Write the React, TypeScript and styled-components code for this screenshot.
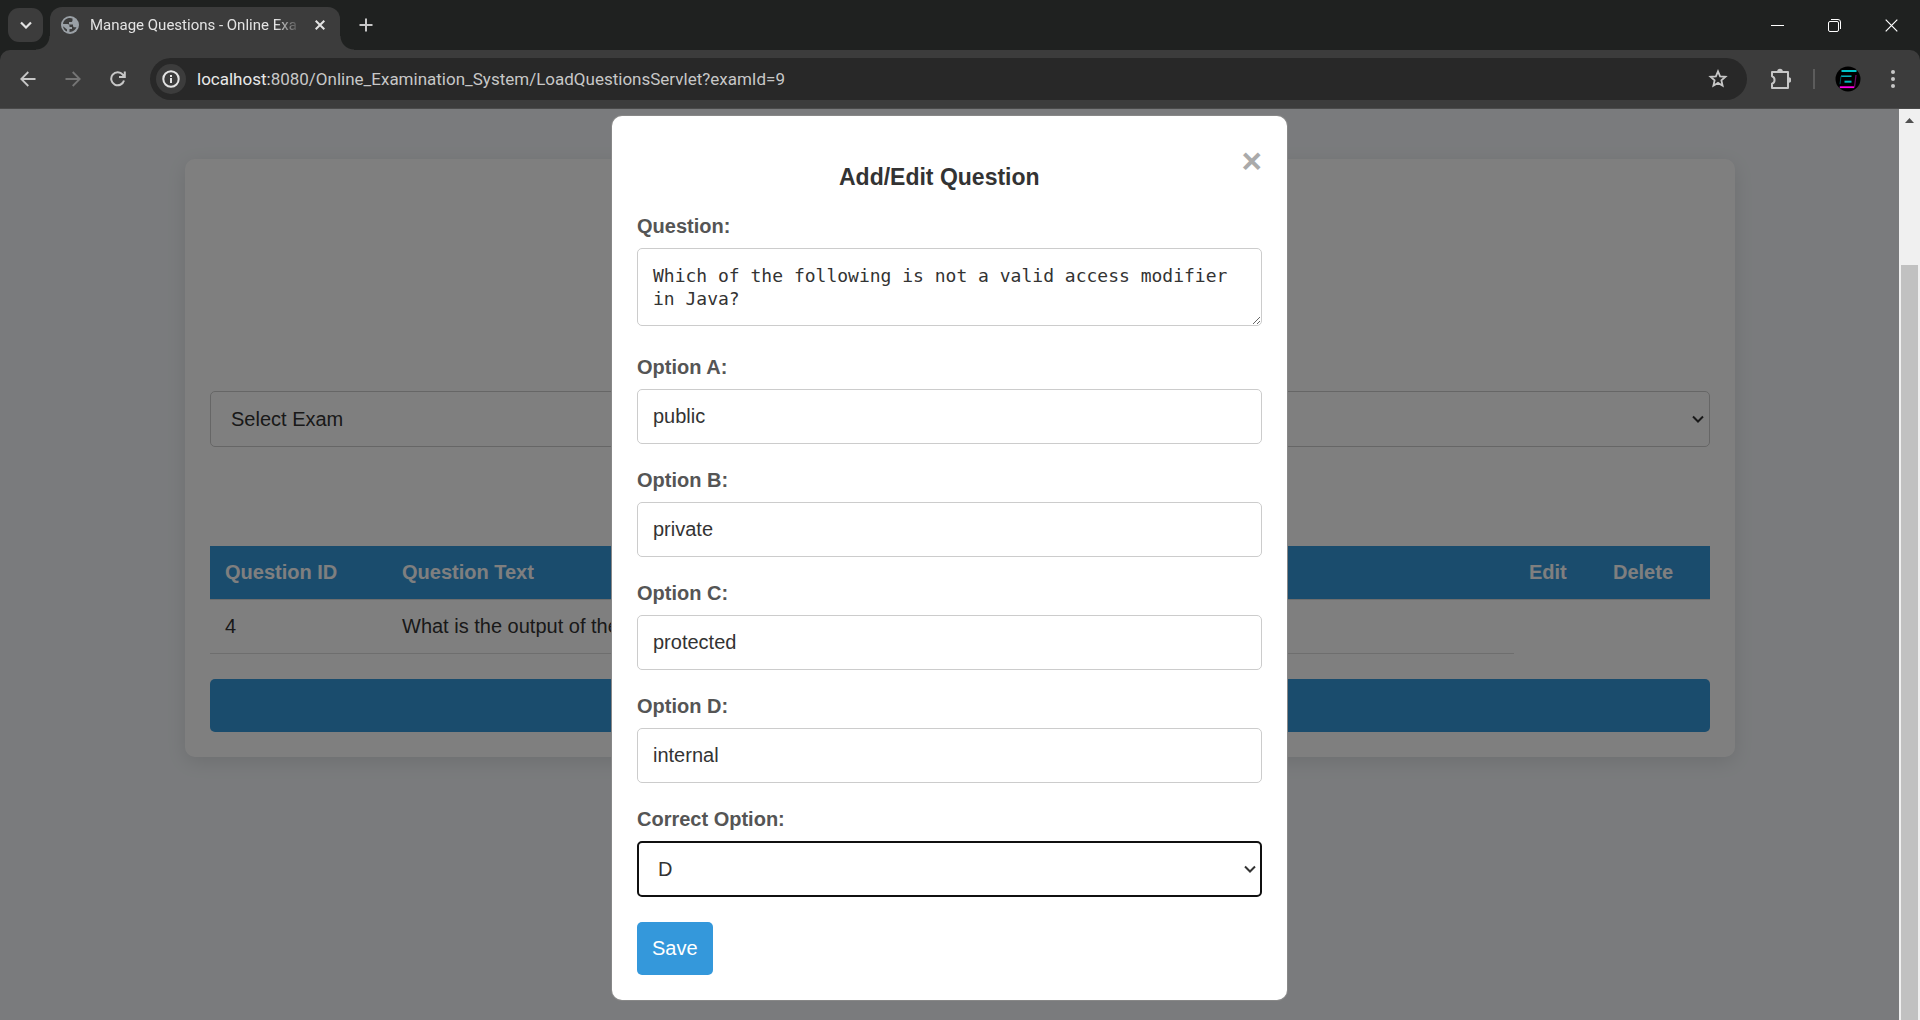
import React, { useState } from "react";
import styled, { createGlobalStyle } from "styled-components";

const UI_FONT = 'Roboto, "Open Sans", "Noto Sans", sans-serif';
const PAGE_FONT = '"Liberation Sans", Arial, sans-serif';
const MONO_FONT = '"DejaVu Sans Mono", monospace';

const GlobalStyle = createGlobalStyle`
  *, *::before, *::after { box-sizing: border-box; }
  body { margin: 0; background: #f4f7fa; font-family: ${PAGE_FONT}; }
  button, input, select, textarea { font: inherit; margin: 0; }
`;

/* ---------- Browser chrome ---------- */

const Browser = styled.div`
  display: flex;
  flex-direction: column;
  height: 100vh;
  overflow: hidden;
`;

const TabStrip = styled.header`
  display: flex;
  align-items: center;
  flex: none;
  height: 50px;
  padding-left: 8px;
  background: #1f2120;
  color: #e3e3e3;
`;

const ChromeButton = styled.button<{ $w?: number; $h?: number; $color?: string }>`
  display: flex;
  align-items: center;
  justify-content: center;
  flex: none;
  width: ${(p) => p.$w ?? 45}px;
  height: ${(p) => p.$h ?? 42}px;
  padding: 0;
  border: 0;
  background: transparent;
  color: ${(p) => p.$color ?? "#c7c7c7"};
`;

const TabSearch = styled(ChromeButton)`
  border-radius: 11px;
  background: #3c3c3c;
`;

const Tab = styled.div`
  position: relative;
  display: flex;
  align-items: center;
  align-self: flex-end;
  width: 290px;
  height: 43px;
  margin-left: 7px;
  padding: 0 9px 7px 11px;
  border-radius: 12px 12px 0 0;
  background: #3c3c3c;

  &::before,
  &::after {
    content: "";
    position: absolute;
    bottom: 0;
    width: 14px;
    height: 14px;
  }
  &::before {
    right: 100%;
    background: radial-gradient(circle at 0 0, transparent 13px, #3c3c3c 14px);
  }
  &::after {
    left: 100%;
    background: radial-gradient(circle at 100% 0, transparent 13px, #3c3c3c 14px);
  }
`;

const TabTitle = styled.span`
  flex: 1;
  margin: 0 8px 0 11px;
  overflow: hidden;
  white-space: nowrap;
  font: 15px/20px ${UI_FONT};
  mask-image: linear-gradient(to right, #000 88%, transparent);
`;

const WindowControls = styled.div`
  display: flex;
  margin-left: auto;
`;

const Toolbar = styled.nav`
  flex: none;
  background: #1f2120;
`;

const ToolbarRow = styled.div`
  display: flex;
  align-items: center;
  height: 59px;
  padding: 0 5px;
  border-bottom: 1px solid #4a4a4a;
  border-radius: 10px 10px 0 0;
  background: #3c3c3c;
`;

const Omnibox = styled.div`
  display: flex;
  flex: 1;
  align-items: center;
  height: 42px;
  margin: 0 9px 0 10px;
  padding: 0 7px 0 6px;
  border-radius: 21px;
  background: #282828;
`;

const SiteInfo = styled(ChromeButton)`
  border-radius: 50%;
  background: #3c3c3c;
`;

const Address = styled.div`
  flex: 1;
  margin-left: 11px;
  color: #c7c7c7;
  white-space: nowrap;
  font: 17px/24px ${UI_FONT};
`;

const Host = styled.span`
  color: #e8e8e8;
`;

const Separator = styled.span`
  width: 2px;
  height: 20px;
  margin: 0 10px 0 9px;
  background: #5c5c5c;
`;

/* ---------- Question list page ---------- */

const Viewport = styled.main`
  position: relative;
  flex: 1;
  min-height: 0;
  overflow: hidden;
  background: #f4f7fa;
  color: #333;
  font-size: 20px;
  line-height: 23px;
`;

const Card = styled.section`
  max-width: 1550px;
  margin: 50px auto;
  padding: 232px 25px 25px;
  border-radius: 10px;
  background: #fff;
  box-shadow: 0 5px 19px rgba(0, 0, 0, 0.1);
`;

const SelectWrap = styled.div`
  position: relative;
  color: #333;

  & > svg {
    position: absolute;
    top: 24px;
    right: 6px;
    pointer-events: none;
  }
`;

const Select = styled.select<{ $active?: boolean }>`
  display: block;
  width: 100%;
  height: 56px;
  padding: ${(p) => (p.$active ? "0 19px" : "0 20px")};
  border: ${(p) => (p.$active ? "2px solid #101010" : "1px solid #ccc")};
  border-radius: 5px;
  outline: 0;
  appearance: none;
  background: #fff;
  color: #333;
`;

const Table = styled.table`
  width: 100%;
  margin: 99px 0 25px;
  border-collapse: separate;
  border-spacing: 0;
  table-layout: fixed;
`;

const HeadCell = styled.th`
  height: 54px;
  padding: 0 15px;
  border-bottom: 1px solid #ddd;
  background: #3498db;
  background-clip: padding-box;
  color: #fff;
  text-align: left;
`;

const Cell = styled.td`
  height: 54px;
  padding: 0 15px;
  border-bottom: 1px solid #ddd;
  white-space: nowrap;
`;

const Col = styled.col<{ $w?: number }>`
  width: ${(p) => (p.$w ? `${p.$w}px` : "auto")};
`;

const Button = styled.button<{ $block?: boolean }>`
  display: block;
  width: ${(p) => (p.$block ? "100%" : "auto")};
  height: 53px;
  padding: 0 15px;
  border: 0;
  border-radius: 5px;
  background: #3498db;
  color: #fff;
`;

/* ---------- Modal ---------- */

const Overlay = styled.div`
  position: absolute;
  inset: 0;
  display: flex;
  background: rgba(0, 0, 0, 0.5);
`;

const OverlayBody = styled.div`
  display: flex;
  flex: 1;
  align-items: flex-start;
  justify-content: center;
  padding-top: 7px;
`;

const Dialog = styled.section`
  width: 675px;
  padding: 25px;
  border-radius: 10px;
  background: #fff;
  box-shadow: 0 0 0 1px #888;
`;

const CloseButton = styled.button`
  float: right;
  padding: 0;
  border: 0;
  background: transparent;
  color: #aaa;
  font-size: 35px;
  font-weight: bold;
  line-height: 40px;
`;

const DialogTitle = styled.h2`
  margin: 0 0 24px;
  padding-top: 22px;
  text-align: center;
  font-size: 23px;
  line-height: 28px;
`;

const Field = styled.div<{ $gap?: number }>`
  margin-bottom: ${(p) => p.$gap ?? 25}px;
`;

const Label = styled.label`
  display: block;
  margin-bottom: 10px;
  color: #555;
  font-weight: bold;
`;

const TextInput = styled.input`
  display: block;
  width: 100%;
  height: 55px;
  padding: 0 15px;
  border: 1px solid #ccc;
  border-radius: 5px;
  color: #333;
`;

const TextArea = styled.textarea`
  display: block;
  width: 100%;
  height: 78px;
  padding: 15px;
  border: 1px solid #ccc;
  border-radius: 5px;
  resize: vertical;
  color: #333;
  font: 18px/23px ${MONO_FONT};
`;

const ScrollTrack = styled.div`
  display: flex;
  flex-direction: column;
  flex: none;
  align-items: center;
  width: 21px;
  padding-top: 9px;
  background: #f0f0f0;
`;

const ScrollThumb = styled.div`
  flex: 1;
  width: 17px;
  margin-top: 142px;
  background: #c1c1c1;
`;

/* ---------- Icons ---------- */

const Chevron = ({ size = 12, width = 2 }: { size?: number; width?: number }) => (
  <svg width={size} height={8} viewBox="0 0 12 8" fill="none" stroke="currentColor" strokeWidth={width}>
    <path d="M1 1.5l5 5 5-5" />
  </svg>
);

const GlobeIcon = () => (
  <svg width="18" height="18" viewBox="0 0 18 18">
    <circle cx="9" cy="9" r="9" fill="#9aa0a6" />
    <path
      d="M8 2.1C4.800 2.500 2.400 5 2 8h4.500c1.200 0 2 .8 2 2v1h2.500v2H8.500v2.900c3.200.2 6-1.800 7-4.600h-2c-1 0-1.500-.7-1.500-1.500V8.500H8V6h2c1 0 1.500-.6 1.500-1.500V2.600C10.500 2.100 9.200 1.900 8 2.100z"
      fill="#3c3c3c"
    />
    <path d="M2 10.200l4 3.300v2A7 7 0 0 1 2 10.200z" fill="#3c3c3c" />
  </svg>
);

const CrossIcon = ({ size, width }: { size: number; width: number }) => (
  <svg width={size} height={size} viewBox={`0 0 ${size} ${size}`} stroke="currentColor" strokeWidth={width}>
    <path d={`M.7 .7L${size - 0.7} ${size - 0.7}M${size - 0.7} .7L.7 ${size - 0.7}`} />
  </svg>
);

const PlusIcon = () => (
  <svg width="14" height="14" viewBox="0 0 14 14" stroke="currentColor" strokeWidth="2">
    <path d="M7 .5v13M.5 7h13" />
  </svg>
);

const MinimizeIcon = () => (
  <svg width="13" height="13" viewBox="0 0 13 13" stroke="#fff">
    <path d="M0 6.500h13" />
  </svg>
);

const RestoreIcon = () => (
  <svg width="13" height="13" viewBox="0 0 13 13" fill="none" stroke="#fff">
    <rect x=".5" y="2.500" width="10" height="10" rx="1.500" />
    <path d="M3 .5h7a2.500 2.500 0 0 1 2.500 2.500v7" />
  </svg>
);

const ArrowIcon = ({ flip }: { flip?: boolean }) => (
  <svg width="16" height="16" viewBox="0 0 16 16" fill="none" stroke="currentColor" strokeWidth="1.800">
    <path d={flip ? "M.5 8h14M7.700 1l7 7-7 7" : "M15.500 8h-14M8.300 1l-7 7 7 7"} />
  </svg>
);

const ReloadIcon = () => (
  <svg width="16" height="16" viewBox="0 0 16 16" fill="none" stroke="currentColor" strokeWidth="2">
    <path d="M14 9.500A6.500 6.500 0 1 1 12.800 3.700L14 5.500M14.800 .5V6H9" />
  </svg>
);

const InfoIcon = () => (
  <svg width="18" height="18" viewBox="0 0 18 18" fill="none" stroke="currentColor" strokeWidth="2">
    <circle cx="9" cy="9" r="7.700" />
    <path d="M9 8v5M9 5v2" />
  </svg>
);

const StarIcon = () => (
  <svg width="20" height="20" viewBox="0 0 20 20" fill="none" stroke="currentColor" strokeWidth="1.800">
    <path d="M10 2.300l2.100 5 5.400.5-4.100 3.600 1.200 5.300L10 13.900l-4.600 2.800 1.200-5.300L2.500 7.800l5.400-.5z" />
  </svg>
);

const PuzzleIcon = () => (
  <svg width="22" height="22" viewBox="0 0 22 22" fill="none" stroke="currentColor" strokeWidth="2">
    <path
      d="M3 4h16v16H3v-4.300c3.400-1 3.400-6.400 0-7.400z"
      strokeLinejoin="round"
    />
    <path d="M8.200 3.500a2.800 2.800 0 0 1 5.600 0zM19.500 9.200a2.800 2.800 0 0 1 0 5.600z" fill="currentColor" stroke="none" />
  </svg>
);

const AvatarIcon = () => (
  <svg width="26" height="26" viewBox="0 0 26 26" fill="none">
    <circle cx="13" cy="13" r="12.500" fill="#000" />
    <path d="M6.500 5h15" stroke="#00dde0" strokeWidth="1.800" />
    <path d="M6 10.200h10.500" stroke="#00c4d0" strokeWidth="1.400" />
    <path d="M6 10.200l-1 8" stroke="#04545c" strokeWidth="1" />
    <path d="M9.500 15.700h7" stroke="#00b4b8" strokeWidth="2" />
    <path d="M4.800 21.200h14.500" stroke="#ff00e6" strokeWidth="1.800" />
    <path d="M21 9l-1.500 12" stroke="#6a0a62" strokeWidth="1.200" />
  </svg>
);

const DotsIcon = () => (
  <svg width="4" height="18" viewBox="0 0 4 18" fill="currentColor">
    <circle cx="2" cy="2" r="2" />
    <circle cx="2" cy="9" r="2" />
    <circle cx="2" cy="16" r="2" />
  </svg>
);

const ScrollUpIcon = () => (
  <svg width="9" height="5" viewBox="0 0 9 5" fill="#505050">
    <path d="M4.500 0L9 5H0z" />
  </svg>
);

/* ---------- App ---------- */

const INITIAL_OPTIONS = [
  { key: "A", value: "public" },
  { key: "B", value: "private" },
  { key: "C", value: "protected" },
  { key: "D", value: "internal" },
];

export default function App() {
  const [correct, setCorrect] = useState("D");

  return (
    <>
      <GlobalStyle />
      <Browser>
        <TabStrip>
          <TabSearch $w={35} $h={34} $color="#e3e3e3" aria-label="Search tabs">
            <Chevron size={12} width={2.2} />
          </TabSearch>
          <Tab>
            <GlobeIcon />
            <TabTitle>Manage Questions - Online Exa</TabTitle>
            <ChromeButton $w={22} $h={22} $color="#e3e3e3" aria-label="Close tab">
              <CrossIcon size={10} width={2} />
            </ChromeButton>
          </Tab>
          <ChromeButton $w={51} aria-label="New tab">
            <PlusIcon />
          </ChromeButton>
          <WindowControls>
            <ChromeButton $w={57} aria-label="Minimize"><MinimizeIcon /></ChromeButton>
            <ChromeButton $w={57} aria-label="Restore"><RestoreIcon /></ChromeButton>
            <ChromeButton $w={57} $color="#fff" aria-label="Close window"><CrossIcon size={13} width={1.2} /></ChromeButton>
          </WindowControls>
        </TabStrip>

        <Toolbar>
          <ToolbarRow>
            <ChromeButton aria-label="Back"><ArrowIcon /></ChromeButton>
            <ChromeButton $color="#757575" aria-label="Forward"><ArrowIcon flip /></ChromeButton>
            <ChromeButton aria-label="Reload"><ReloadIcon /></ChromeButton>
            <Omnibox>
              <SiteInfo $w={30} $h={30} $color="#e3e3e3" aria-label="Site information"><InfoIcon /></SiteInfo>
              <Address>
                <Host>localhost:</Host>8080/Online_Examination_System/LoadQuestionsServlet?examId=9
              </Address>
              <ChromeButton aria-label="Bookmark"><StarIcon /></ChromeButton>
            </Omnibox>
            <ChromeButton $w={48} aria-label="Extensions"><PuzzleIcon /></ChromeButton>
            <Separator />
            <ChromeButton $w={46} aria-label="Profile"><AvatarIcon /></ChromeButton>
            <ChromeButton $w={44} aria-label="Menu"><DotsIcon /></ChromeButton>
          </ToolbarRow>
        </Toolbar>

        <Viewport>
          <Card>
            <SelectWrap>
              <Select aria-label="Exam" defaultValue="">
                <option value="">Select Exam</option>
              </Select>
              <Chevron />
            </SelectWrap>
            <Table>
              <colgroup>
                <Col $w={177} />
                <Col />
                <Col $w={84} />
                <Col $w={112} />
              </colgroup>
              <thead>
                <tr>
                  <HeadCell scope="col">Question ID</HeadCell>
                  <HeadCell scope="col">Question Text</HeadCell>
                  <HeadCell scope="col">Edit</HeadCell>
                  <HeadCell scope="col">Delete</HeadCell>
                </tr>
              </thead>
              <tbody>
                <tr>
                  <Cell>4</Cell>
                  <Cell>What is the output of the</Cell>
                </tr>
              </tbody>
            </Table>
            <Button $block type="button" aria-label="Add question" />
          </Card>

          <Overlay>
            <OverlayBody>
              <Dialog role="dialog" aria-modal="true" aria-labelledby="dialog-title">
                <CloseButton type="button" aria-label="Close">×</CloseButton>
                <DialogTitle id="dialog-title">Add/Edit Question</DialogTitle>
                <form onSubmit={(e) => e.preventDefault()}>
                  <Field $gap={30}>
                    <Label htmlFor="question">Question:</Label>
                    <TextArea
                      id="question"
                      spellCheck={false}
                      defaultValue="Which of the following is not a valid access modifier in Java?"
                    />
                  </Field>
                  {INITIAL_OPTIONS.map(({ key, value }) => (
                    <Field key={key}>
                      <Label htmlFor={`option-${key}`}>Option {key}:</Label>
                      <TextInput id={`option-${key}`} type="text" defaultValue={value} />
                    </Field>
                  ))}
                  <Field>
                    <Label htmlFor="correct">Correct Option:</Label>
                    <SelectWrap>
                      <Select $active id="correct" value={correct} onChange={(e) => setCorrect(e.target.value)}>
                        {INITIAL_OPTIONS.map(({ key }) => (
                          <option key={key}>{key}</option>
                        ))}
                      </Select>
                      <Chevron />
                    </SelectWrap>
                  </Field>
                  <Button type="submit">Save</Button>
                </form>
              </Dialog>
            </OverlayBody>
            <ScrollTrack>
              <ScrollUpIcon />
              <ScrollThumb />
            </ScrollTrack>
          </Overlay>
        </Viewport>
      </Browser>
    </>
  );
}
